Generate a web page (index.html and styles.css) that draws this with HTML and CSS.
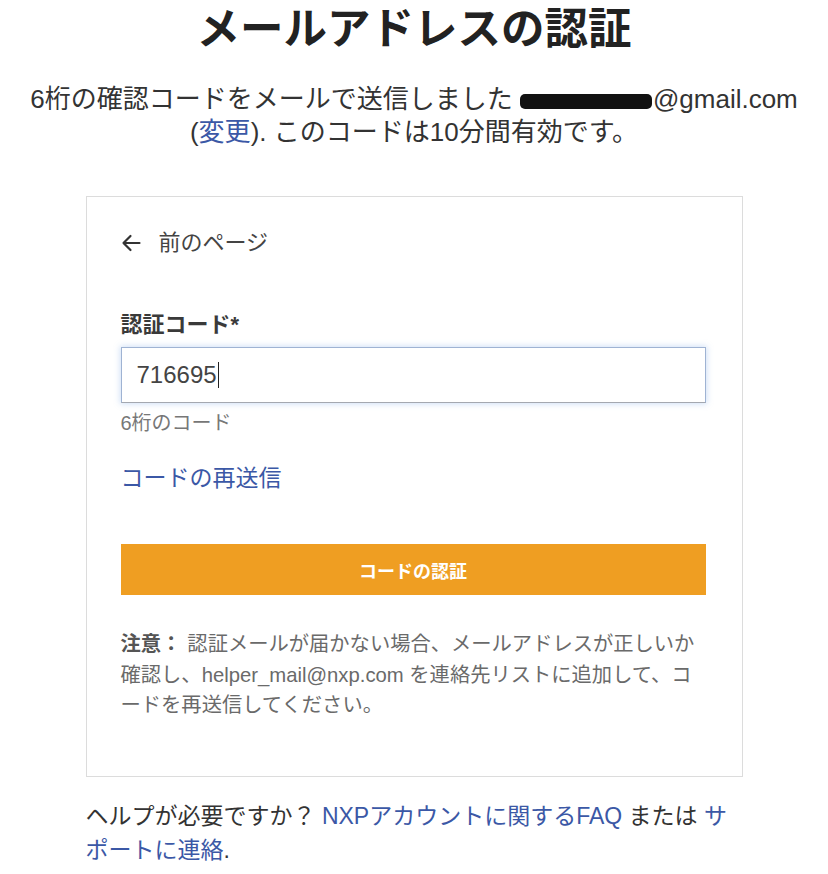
FILE: index.html
```html
<!DOCTYPE html>
<html lang="ja">
<head>
<meta charset="utf-8">
<title>メールアドレスの認証</title>
<link rel="stylesheet" href="styles.css">
</head>
<body>
<main class="page">
  <h1 class="title">メールアドレスの認証</h1>
  <p class="lead">6桁の確認コードをメールで送信しました <span class="redact"></span>@gmail.com<br>(<a class="link" href="#">変更</a>). このコードは10分間有効です。</p>

  <section class="card">
    <a class="back" href="#">
      <svg class="back-icon" width="20" height="18" viewBox="0 0 20 18" aria-hidden="true">
        <path d="M18.5 9H2.5M9.5 2L2.5 9l7 7" fill="none" stroke="#333" stroke-width="2.2" stroke-linecap="round" stroke-linejoin="round"/>
      </svg>
      <span>前のページ</span>
    </a>

    <label class="label">認証コード*</label>
    <div class="input"><span class="input-text">716695</span><span class="caret"></span></div>
    <p class="hint">6桁のコード</p>

    <a class="resend link" href="#">コードの再送信</a>

    <button class="btn" type="button">コードの認証</button>

    <p class="note"><strong>注意：</strong>認証メールが届かない場合、メールアドレスが正しいか確認し、helper_mail@nxp.com を連絡先リストに追加して、コードを再送信してください。</p>
  </section>

  <p class="help">ヘルプが必要ですか？ <a class="link" href="#">NXPアカウントに関するFAQ</a> または <a class="link" href="#">サポートに連絡</a>.</p>
</main>
</body>
</html>
```

FILE: styles.css
```css
* { box-sizing: border-box; }

html, body {
  margin: 0;
  padding: 0;
  background: #ffffff;
}

body {
  font-family: "Liberation Sans", "Noto Sans CJK JP", sans-serif;
  color: #333;
}

.page {
  width: 828px;
  margin: 0 auto;
  display: flex;
  flex-direction: column;
  align-items: center;
}

.title {
  margin: 3px 0 0;
  font-size: 43.5px;
  line-height: 52px;
  font-weight: 700;
  color: #222;
  text-align: center;
}

.lead {
  margin: 28px 0 0;
  font-size: 26px;
  line-height: 33px;
  text-align: center;
  color: #333;
  white-space: nowrap;
}

.redact {
  display: inline-block;
  width: 132px;
  height: 15px;
  background: #111;
  border-radius: 5px;
  vertical-align: -1px;
  margin-right: 1px;
}

.link {
  color: #3b58a6;
  text-decoration: none;
}

.card {
  margin-top: 47px;
  width: 657px;
  border: 1px solid #dcdcdc;
  padding: 31px 36px 55px 34px;
  display: flex;
  flex-direction: column;
}

.back {
  display: flex;
  align-items: center;
  gap: 18px;
  color: #444;
  text-decoration: none;
  font-size: 22px;
  line-height: 30px;
}

.back-icon { flex: none; }

.label {
  margin-top: 52px;
  font-size: 22px;
  line-height: 30px;
  font-weight: 700;
  color: #3a3a3a;
}

.input {
  margin-top: 7px;
  height: 56px;
  border: 1px solid #9fb3d3;
  border-bottom-color: #a4a8b0;
  box-shadow: 0 0 6px 1px rgba(120, 165, 230, 0.35);
  display: flex;
  align-items: center;
  padding-left: 15px;
  font-size: 24px;
  color: #444;
}

.caret {
  display: inline-block;
  width: 1px;
  height: 26px;
  background: #222;
  margin-left: 1px;
}

.hint {
  margin: 7px 0 0;
  font-size: 20px;
  line-height: 26px;
  color: #777;
}

.resend {
  margin-top: 27px;
  font-size: 23px;
  line-height: 30px;
}

.btn {
  margin-top: 51px;
  height: 51px;
  border: 0;
  background: #ef9e22;
  color: #fff;
  font-family: inherit;
  font-size: 18px;
  font-weight: 700;
  cursor: pointer;
}

.note {
  margin: 34px 0 0;
  font-size: 20.3px;
  line-height: 30.5px;
  color: #6a6a6a;
}

.note strong {
  color: #555;
  font-weight: 700;
  margin-right: 6px;
}

.help {
  margin: 22px 0 0;
  width: 657px;
  font-size: 23px;
  line-height: 34px;
  color: #333;
}
```
